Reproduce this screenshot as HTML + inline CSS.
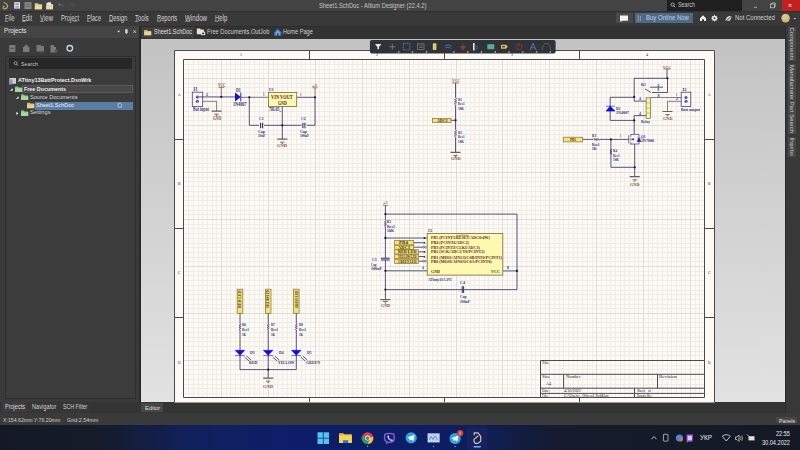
<!DOCTYPE html>
<html><head><meta charset="utf-8">
<style>
*{margin:0;padding:0;box-sizing:border-box}
html,body{width:800px;height:450px;overflow:hidden;background:#333;font-family:"Liberation Sans",sans-serif;color:#ddd}
.a{position:absolute}
.t{position:absolute;white-space:nowrap;line-height:1;transform-origin:0 0}
svg{position:absolute;left:0;top:0}
</style></head><body>
<!-- title bar -->
<div class="a" style="left:0;top:0;width:800px;height:11px;background:#434343"></div>
<div class="a" style="left:667px;top:0;width:75px;height:11px;background:#1f1f1f"></div>
<div class="a" style="left:742px;top:0;width:40px;height:11px;background:#434343"></div>
<div class="a" style="left:782px;top:0;width:18px;height:11px;background:#c42020"></div>
<!-- menu bar -->
<div class="a" style="left:0;top:11px;width:800px;height:14.5px;background:#393939;border-top:0.8px solid #303030"></div>
<div class="a" style="left:615.6px;top:13px;width:17px;height:10px;background:#4a4a4a"></div>
<div class="a" style="left:635px;top:13px;width:58px;height:10px;background:#4d6985"></div>
<!-- left panel -->
<div class="a" style="left:0;top:25.5px;width:139px;height:376px;background:#3a3a3a;border-top:1px solid #2b2b2b"></div>
<div class="a" style="left:0;top:26.4px;width:139px;height:11.7px;background:#444444"></div>
<div class="a" style="left:5px;top:55.6px;width:131px;height:343px;background:#3c3c3c;border:1px solid #2e2e2e"></div>
<div class="a" style="left:9px;top:58.2px;width:123px;height:10.8px;background:#272727;border-radius:1px"></div>
<div class="a" style="left:22px;top:85.4px;width:111px;height:7.6px;background:#484848;border:1px solid #5a5a5a"></div>
<div class="a" style="left:34.5px;top:101.6px;width:98.5px;height:8px;background:#5a7da3"></div>
<!-- divider -->
<div class="a" style="left:139px;top:25.5px;width:2.3px;height:387px;background:#2a2a2a"></div>
<!-- doc tabs -->
<div class="a" style="left:141.3px;top:25.5px;width:643.4px;height:13px;background:#333333;border-top:1px solid #2d2d2d"></div>
<div class="a" style="left:141.5px;top:26.5px;width:52.5px;height:11.5px;background:#3f3f3f"></div>
<!-- sheet bg -->
<div class="a" style="left:141.3px;top:38.5px;width:643.4px;height:364px;background:linear-gradient(#c3c3c3,#e2e2e2)"></div>
<!-- right strip -->
<div class="a" style="left:784.7px;top:25.5px;width:15.3px;height:387.5px;background:#383838;border-left:1px solid #2a2a2a"></div>
<div class="a" style="left:788.3px;top:26.7px;width:7.7px;height:34.6px;background:#474747"></div>
<div class="a" style="left:788.3px;top:64px;width:7.7px;height:70px;background:#474747"></div>
<div class="a" style="left:788.3px;top:136.7px;width:7.7px;height:20px;background:#474747"></div>
<!-- bottom tabs strip -->
<div class="a" style="left:0;top:401.75px;width:784.7px;height:10.75px;background:#343434"></div>
<div class="a" style="left:1.9px;top:402px;width:25px;height:9.75px;background:#3c3c3c"></div>
<div class="a" style="left:28px;top:402px;width:30.5px;height:9.75px;background:#363636"></div>
<div class="a" style="left:59.5px;top:402px;width:30px;height:9.75px;background:#363636"></div>
<div class="a" style="left:141.3px;top:402.5px;width:21.6px;height:9.1px;background:#474747"></div>
<!-- status bar -->
<div class="a" style="left:0;top:412.5px;width:800px;height:12.5px;background:#3a3a3a"></div>
<div class="a" style="left:776px;top:416.9px;width:21px;height:6.5px;background:#474747"></div>
<!-- taskbar -->
<div class="a" style="left:0;top:425px;width:800px;height:25px;background:linear-gradient(90deg,#141925 0px,#151b2a 100px,#10205c 190px,#0d1d6a 300px,#0e1d64 440px,#111d4c 500px,#151b2c 565px,#141925 800px)"></div>
<!-- sheet -->
<svg width="800" height="450" viewBox="0 0 800 450">
<rect x="174" y="50" width="541" height="352.5" fill="#fdfaf5"/>
<path d="M183.5 59.5V397.5M188.5 59.5V397.5M193.5 59.5V397.5M198.5 59.5V397.5M202.5 59.5V397.5M207.5 59.5V397.5M212.5 59.5V397.5M216.5 59.5V397.5M226.5 59.5V397.5M230.5 59.5V397.5M235.5 59.5V397.5M240.5 59.5V397.5M244.5 59.5V397.5M249.5 59.5V397.5M254.5 59.5V397.5M259.5 59.5V397.5M263.5 59.5V397.5M273.5 59.5V397.5M277.5 59.5V397.5M282.5 59.5V397.5M287.5 59.5V397.5M291.5 59.5V397.5M296.5 59.5V397.5M301.5 59.5V397.5M305.5 59.5V397.5M310.5 59.5V397.5M319.5 59.5V397.5M324.5 59.5V397.5M329.5 59.5V397.5M334.5 59.5V397.5M338.5 59.5V397.5M343.5 59.5V397.5M348.5 59.5V397.5M352.5 59.5V397.5M357.5 59.5V397.5M366.5 59.5V397.5M371.5 59.5V397.5M376.5 59.5V397.5M380.5 59.5V397.5M385.5 59.5V397.5M390.5 59.5V397.5M395.5 59.5V397.5M399.5 59.5V397.5M404.5 59.5V397.5M413.5 59.5V397.5M418.5 59.5V397.5M423.5 59.5V397.5M427.5 59.5V397.5M432.5 59.5V397.5M437.5 59.5V397.5M441.5 59.5V397.5M446.5 59.5V397.5M451.5 59.5V397.5M460.5 59.5V397.5M465.5 59.5V397.5M470.5 59.5V397.5M474.5 59.5V397.5M479.5 59.5V397.5M484.5 59.5V397.5M488.5 59.5V397.5M493.5 59.5V397.5M498.5 59.5V397.5M507.5 59.5V397.5M512.5 59.5V397.5M516.5 59.5V397.5M521.5 59.5V397.5M526.5 59.5V397.5M531.5 59.5V397.5M535.5 59.5V397.5M540.5 59.5V397.5M545.5 59.5V397.5M554.5 59.5V397.5M559.5 59.5V397.5M563.5 59.5V397.5M568.5 59.5V397.5M573.5 59.5V397.5M577.5 59.5V397.5M582.5 59.5V397.5M587.5 59.5V397.5M592.5 59.5V397.5M601.5 59.5V397.5M606.5 59.5V397.5M610.5 59.5V397.5M615.5 59.5V397.5M620.5 59.5V397.5M624.5 59.5V397.5M629.5 59.5V397.5M634.5 59.5V397.5M638.5 59.5V397.5M648.5 59.5V397.5M652.5 59.5V397.5M657.5 59.5V397.5M662.5 59.5V397.5M667.5 59.5V397.5M671.5 59.5V397.5M676.5 59.5V397.5M681.5 59.5V397.5M685.5 59.5V397.5M695.5 59.5V397.5M699.5 59.5V397.5M183.5 59.5H704.5M183.5 64.5H704.5M183.5 69.5H704.5M183.5 73.5H704.5M183.5 83.5H704.5M183.5 87.5H704.5M183.5 92.5H704.5M183.5 97.5H704.5M183.5 102.5H704.5M183.5 106.5H704.5M183.5 111.5H704.5M183.5 116.5H704.5M183.5 120.5H704.5M183.5 130.5H704.5M183.5 134.5H704.5M183.5 139.5H704.5M183.5 144.5H704.5M183.5 149.5H704.5M183.5 153.5H704.5M183.5 158.5H704.5M183.5 163.5H704.5M183.5 167.5H704.5M183.5 177.5H704.5M183.5 181.5H704.5M183.5 186.5H704.5M183.5 191.5H704.5M183.5 196.5H704.5M183.5 200.5H704.5M183.5 205.5H704.5M183.5 210.5H704.5M183.5 214.5H704.5M183.5 224.5H704.5M183.5 228.5H704.5M183.5 233.5H704.5M183.5 238.5H704.5M183.5 243.5H704.5M183.5 247.5H704.5M183.5 252.5H704.5M183.5 257.5H704.5M183.5 261.5H704.5M183.5 271.5H704.5M183.5 275.5H704.5M183.5 280.5H704.5M183.5 285.5H704.5M183.5 290.5H704.5M183.5 294.5H704.5M183.5 299.5H704.5M183.5 304.5H704.5M183.5 308.5H704.5M183.5 318.5H704.5M183.5 322.5H704.5M183.5 327.5H704.5M183.5 332.5H704.5M183.5 337.5H704.5M183.5 341.5H704.5M183.5 346.5H704.5M183.5 351.5H704.5M183.5 355.5H704.5M183.5 365.5H704.5M183.5 369.5H704.5M183.5 374.5H704.5M183.5 379.5H704.5M183.5 384.5H704.5M183.5 388.5H704.5M183.5 393.5H704.5" stroke="#eeede7" stroke-width="1" fill="none"/>
<path d="M221.5 59.5V397.5M268.5 59.5V397.5M315.5 59.5V397.5M362.5 59.5V397.5M409.5 59.5V397.5M456.5 59.5V397.5M502.5 59.5V397.5M549.5 59.5V397.5M596.5 59.5V397.5M643.5 59.5V397.5M690.5 59.5V397.5M183.5 78.5H704.5M183.5 125.5H704.5M183.5 172.5H704.5M183.5 219.5H704.5M183.5 266.5H704.5M183.5 313.5H704.5M183.5 360.5H704.5" stroke="#dfddd6" stroke-width="1" fill="none"/>

<g fill="none" stroke="#4a4a4a" stroke-width="1">
<path d="M174.5 50.5H714.5V402.5M174.5 50.5V402.5"/>
<path d="M183.5 59.5H704.5V397.5H183.5Z"/>
<path d="M309.5 50V59.5M444.5 50V59.5M579.5 50V59.5M174 139.5H183.5M174 228.5H183.5M174 317.5H183.5M704.5 139.5H714.5M704.5 228.5H714.5M704.5 317.5H714.5M309.5 397.5V402M444.5 397.5V402M579.5 397.5V402"/>
</g>
<g fill="none" stroke-width="0.8">
<!-- ===== Section 1: input / regulator ===== -->
<rect x="192.3" y="92.2" width="10.4" height="14.2" stroke="#44447c" stroke-width="0.8"/>
<path d="M202.7 101.3H216.6V111.1" stroke="#6e6456"/>
<path d="M198.6 96.9H235" stroke="#30305e"/>
<path d="M221.3 96.9V87.6M218.5 87.6H224.1" stroke="#9a5a50" stroke-width="0.8"/>
<path d="M240.8 97.3H268.4" stroke="#585866"/>
<path d="M249.3 97.3V125.3H315M315 97.3V125.3M282.3 106.4V139.1M296.7 97.3H315" stroke="#30305e"/>
<path d="M315 97.3V87.8M312.5 87.8H317.5" stroke="#9a5a50" stroke-width="0.8"/>
<rect x="268.4" y="92.4" width="28.3" height="14" fill="#fdf9b0" stroke="#7a6a3a"/>
<path d="M259 125.3H264" stroke="#fdfaf5" stroke-width="1.6"/>
<path d="M260.6 122.8V128.2M262.6 122.8V128.2" stroke="#30305e" stroke-width="1.1"/>
<path d="M301.5 125.3H306.5" stroke="#fdfaf5" stroke-width="1.6"/>
<path d="M302.9 122.8V128.2M305.2 122.8Q304.2 125.5 305.2 128.2" stroke="#30305e" stroke-width="1.1"/>

<!-- ===== Section 2: divider ===== -->
<path d="M455.5 82.9V97.6M455.5 105.2V129.7M455.5 137.3V152.4M451 120.3H455.5" stroke="#30305e"/>
<path d="M455.5 97.6L456.5 98.6L454.5 99.6L456.5 100.6L454.5 101.6L456.5 102.6L454.5 103.6L455.5 105.2M455.5 129.7L456.5 130.7L454.5 131.7L456.5 132.7L454.5 133.7L456.5 134.7L454.5 135.7L455.5 137.3" stroke="#30305e" stroke-width="0.7"/>
<path d="M452 82.9H459" stroke="#9a5a50" stroke-width="0.8"/>
<rect x="432.4" y="118.4" width="18.6" height="4" fill="#f6e27a" stroke="#8a7030" stroke-width="0.7"/>

<!-- ===== Section 3: relay ===== -->
<path d="M634.2 78.3H667.5V92.5H652M634.2 78.3V101.1H646M610.2 97.3H634.2M610.2 97.3V120.4H634.2M634.2 115.6H646M634.2 115.6V134.4M634.7 144V176.7M610.9 139.3V167.3H634.7M582.7 139.4H593M599.8 139.4H628.7M667 69V78.3" stroke="#30305e"/>
<path d="M593 139.4L594 138.4L595 140.4L596 138.4L597 140.4L598 138.4L599 140.4L599.8 139.4M610.9 148.7L611.9 149.7L609.9 150.7L611.9 151.7L609.9 152.7L611.9 153.7L610.9 154" stroke="#30305e" stroke-width="0.7"/>
<path d="M645 88.8L651 92.5M650 87.2H663" stroke="#30305e" stroke-width="0.8"/>
<path d="M606 106.2H615M606 111.1H615L610.2 106.2Z" stroke="#1010d8" fill="#1010d8" stroke-width="0.6"/>
<path d="M650.6 97.5H681.2M667.5 101.3H681.2M667.5 101.3V111.5" stroke="#6a6060"/>
<rect x="646.1" y="97.8" width="4.5" height="20.5" fill="#f8f4a8" stroke="#6a6a30" stroke-width="0.7"/>
<path d="M646.1 102.9H650.6M646.1 108H650.6M646.1 113.1H650.6" stroke="#8a8a50" stroke-width="0.5"/>
<path d="M663.5 69H670.5" stroke="#9a5a50" stroke-width="0.8"/>
<rect x="681.2" y="92.2" width="9.6" height="14.3" stroke="#44447c" stroke-width="0.8"/>
<path d="M628.7 135.3V143.3M630.8 134.2V136.8M630.8 138V140.8M630.8 142V144.6M630.8 134.4H639V144H630.8" stroke="#3a3a6a" stroke-width="0.7"/>
<path d="M637 138.2H641M637 141.4H641L639 138.2Z" fill="#1515c8" stroke="#1515c8" stroke-width="0.5"/>
<path d="M631.3 139.3L633.8 138V140.6Z" fill="#1515c8"/>
<rect x="563.2" y="137.2" width="19.5" height="4.7" fill="#f6e27a" stroke="#8a7030" stroke-width="0.7"/>

<!-- ===== Section 4: ATtiny ===== -->
<path d="M385.4 205.4V219.9M385.4 226.6V258.3M385.4 260V299.6M385.4 214.1H517V289.6H385.4M385.4 238H427.2M385.4 270.8H427.2M502.6 270.9H517M413.7 242.7H424M413.7 247.2H424M418.3 251.8H424M418.3 256.5H424M418.3 261.2H424" stroke="#30305e"/>
<path d="M385.4 219.9L386.4 220.9L384.4 221.9L386.4 222.9L384.4 223.9L386.4 224.9L384.4 225.9L385.4 226.6" stroke="#30305e" stroke-width="0.7"/>
<path d="M381 258.3H389.7M381 260H389.7" stroke="#30305e" stroke-width="1.1"/>
<path d="M462.2 286.2V293M463.6 286.2V293" stroke="#30305e" stroke-width="1"/>
<path d="M383 205.4H388" stroke="#9a5a50" stroke-width="0.8"/>
<path d="M380.4 299.6H390.4" stroke="#6e5c58" stroke-width="1.2"/><path d="M383 301.4H387.8M384.6 303H386.2" stroke="#6e5c58" stroke-width="1"/>
<rect x="427.2" y="233.5" width="75.6" height="41.6" fill="#fdf9b0" stroke="#7a6a3a"/>
<path d="M456 235.3H468.8" stroke="#4a3a2a" stroke-width="0.5"/>
<g fill="#f6e27a" stroke="#8a7030" stroke-width="0.7">
<rect x="394.7" y="240.5" width="19" height="4.4"/>
<rect x="394.7" y="245.3" width="19" height="4.2"/>
<rect x="394.7" y="249.8" width="23.6" height="4.2"/>
<rect x="394.7" y="254.5" width="23.6" height="4.2"/>
<rect x="394.7" y="259.2" width="23.6" height="4.2"/>
</g>
<g fill="#fdfaf5" stroke="#1a1a4a" stroke-width="0.5">
<circle cx="423.6" cy="247.2" r="0.9"/><circle cx="425.4" cy="247.2" r="0.9"/>
<circle cx="423.6" cy="261.2" r="0.9"/><circle cx="425.4" cy="261.2" r="0.9"/>
</g>
<g fill="#1a1a4a">
<circle cx="424.5" cy="238" r="0.9"/><circle cx="424.5" cy="251.8" r="0.9"/>
<path d="M423.5 243.6L425.5 243.6L424.5 241.6Z"/><path d="M423.5 257.4L425.5 257.4L424.5 255.4Z"/>
</g>

<!-- ===== Section 5: LEDs ===== -->
<g fill="#f6e27a" stroke="#8a7030" stroke-width="0.7">
<rect x="237.2" y="289.2" width="5.6" height="24.1"/>
<rect x="265.4" y="289.2" width="5.6" height="24.1"/>
<rect x="293.5" y="289.2" width="5.6" height="24.1"/>
</g>
<path d="M240 313.3V323.3M240 330V369.6H296.3V330M268.2 313.3V323.3M268.2 330V378.1M296.3 313.3V323.3" stroke="#30305e"/>
<path d="M240 323.3L241 324.3L239 325.3L241 326.3L239 327.3L241 328.3L239 329.3L240 330M268.2 323.3L269.2 324.3L267.2 325.3L269.2 326.3L267.2 327.3L269.2 328.3L267.2 329.3L268.2 330M296.3 323.3L297.3 324.3L295.3 325.3L297.3 326.3L295.3 327.3L297.3 328.3L295.3 329.3L296.3 330" stroke="#30305e" stroke-width="0.7"/>
<g fill="#1010d8" stroke="#1010d8" stroke-width="0.6">
<path d="M235.2 350.3H244.7L240 355.3ZM235.2 355.6H244.7"/>
<path d="M263.4 350.3H272.9L268.2 355.3ZM263.4 355.6H272.9"/>
<path d="M291.5 350.3H301L296.3 355.3ZM291.5 355.6H301"/>
</g>
<path d="M244.5 357L249 361M246.5 356L251 360M272.7 357L277.2 361M274.7 356L279.2 360M300.8 357L305.3 361M302.8 356L307.3 360" stroke="#1a1a5a" stroke-width="0.7"/>

<path d="M211.6 111.1H221.6M277.3 139.1H287.3M450.5 152.4H460.5M662.5 111.5H672.5M629.7 176.7H639.7M263.2 378.1H273.2" stroke="#6e5c58" stroke-width="1.2"/>
<path d="M214.4 114.2H218.8M215.8 115.4H217.4M280.1 142.2H284.5M281.5 143.4H283.1M453.3 155.5H457.7M454.7 156.7H456.3M665.3 114.6H669.7M666.7 115.8H668.3M632.5 179.8H636.9M633.9 181.0H635.5M266.0 381.2H270.4M267.4 382.4H269.0" stroke="#6e5c58" stroke-width="0.9"/>
<!-- ===== Title block ===== -->
<path d="M540.5 397.5V360.5H704.5M540.5 374.3H704.5M540.5 388.2H704.5M540.5 393.4H704.5M563.6 374.3V388.2M657.5 374.3V388.2M634.5 388.2V397.5" stroke="#4a4a4a" stroke-width="1"/>
</g>
<g fill="#1a1a48">
<circle cx="221.3" cy="96.9" r="1.15"/>
<circle cx="249.3" cy="97.3" r="1.15"/>
<circle cx="315" cy="97.3" r="1.15"/>
<circle cx="282.3" cy="125.3" r="1.15"/>
<circle cx="455.5" cy="120.3" r="1.15"/>
<circle cx="667.5" cy="78.3" r="1.15"/>
<circle cx="634.2" cy="96.9" r="1.15"/>
<circle cx="634.2" cy="120.4" r="1.15"/>
<circle cx="610.9" cy="139.4" r="1.15"/>
<circle cx="634.7" cy="167.3" r="1.15"/>
<circle cx="385.4" cy="214.1" r="1.15"/>
<circle cx="385.4" cy="238" r="1.15"/>
<circle cx="385.4" cy="270.8" r="1.15"/>
<circle cx="385.4" cy="289.6" r="1.15"/>
<circle cx="517" cy="270.9" r="1.15"/>
<circle cx="268.2" cy="369.6" r="1.15"/>
</g>
<g fill="#3a3ab0">
<circle cx="197.3" cy="96.9" r="1.5"/><circle cx="197.3" cy="101.3" r="1.5"/>
<circle cx="686" cy="97.5" r="1.5"/><circle cx="686" cy="101.3" r="1.5"/>
</g>
<path d="M196.5 96.1L198.1 97.7M196.5 100.5L198.1 102.1M685.2 96.7L686.8 98.3M685.2 100.5L686.8 102.1" stroke="#e8e8ff" stroke-width="0.5"/>
<path d="M235 92.6V101.4L240.8 97Z" fill="#1010d8"/>
<path d="M240.8 92.6V101.4" stroke="#1010d8" stroke-width="0.9"/>
<g font-family="Liberation Serif" font-weight="bold" font-size="3.8" fill="#3a3010">
<text transform="translate(241.3 308) rotate(-90)" textLength="17.5" lengthAdjust="spacingAndGlyphs">RED LED</text>
<text transform="translate(269.4 308) rotate(-90)" textLength="17.5" lengthAdjust="spacingAndGlyphs">YELLOW LED</text>
<text transform="translate(297.5 308) rotate(-90)" textLength="17.5" lengthAdjust="spacingAndGlyphs">GREEN LED</text>
</g>

</svg>
<svg width="800" height="450" viewBox="0 0 800 450">
<!-- title bar icons -->
<path d="M3.5 2.5Q7.5 3.5 7.5 5.8Q7.5 8.8 4.5 8.8Q3 8.8 3 7.5Q3 6 5 6" fill="none" stroke="#b9a263" stroke-width="1.2"/>
<rect x="14.2" y="2.2" width="5.8" height="6.4" fill="#e6e6f2"/>
<rect x="15.2" y="3.6" width="3.8" height="1.2" fill="#7a7a9a"/>
<rect x="15.4" y="6" width="3.4" height="1.6" fill="#9a9ab8"/>
<rect x="24.5" y="2.2" width="7" height="6.8" fill="#8a8a8a"/>
<rect x="25.5" y="4" width="5" height="0.8" fill="#5a5a5a"/>
<rect x="25.5" y="6" width="5" height="0.8" fill="#5a5a5a"/>
<path d="M34.8 3.2H38L38.8 4.2H42V9.3H34.8Z" fill="#dccb8a"/>
<path d="M35 5.5H42.3L41.5 9.3H34.8Z" fill="#ecdc9c"/>
<path d="M46.2 3H49.5L50.3 4H53V9.3H46.2Z" fill="#d8cfa8"/>
<path d="M47.5 2.3H51V5H47.5Z" fill="#e8e8f0"/>
<path d="M46.4 5.6H53.3L52.5 9.3H46.2Z" fill="#e6dcaa"/>
<path d="M63.5 6.5Q62 3.8 58.5 4.8M58.2 4.8L60 3.4M58.2 4.8L60 6" fill="none" stroke="#6c6c6c" stroke-width="0.9"/>
<path d="M69 6.5Q70.5 3.8 74 4.8M74.3 4.8L72.5 3.4M74.3 4.8L72.5 6" fill="none" stroke="#585858" stroke-width="0.9"/>
<!-- top right -->
<circle cx="672.6" cy="4.6" r="1.6" fill="none" stroke="#c8c8c8" stroke-width="0.8"/>
<path d="M673.7 5.7L675.2 7.3" stroke="#c8c8c8" stroke-width="0.9"/>
<path d="M754 7.3H757" stroke="#cfcfcf" stroke-width="0.7"/>
<rect x="770.5" y="4" width="3.8" height="3.8" fill="none" stroke="#d0d0d0" stroke-width="0.7"/>
<path d="M771.6 4V3H775.3V6.8H774.3" fill="none" stroke="#d0d0d0" stroke-width="0.6"/>
<path d="M788.6 4L791.4 6.8M791.4 4L788.6 6.8" stroke="#fff" stroke-width="0.9"/>
<path d="M4.8 21.4H8.2M22 21.4H25.6M40 21.4H44.2M73.6 21.4H76.6M87 21.4H90.6M108.8 21.4H113M134.7 21.4H138.2M156.9 21.4H160.6M184.9 21.4H190.5M214.6 21.4H218.6" stroke="#bdbdbd" stroke-width="0.6"/>
<!-- menu row icons -->
<path d="M620 15.5H628V20.8H622.2L620.6 22.2V20.8H620Z" fill="#f2f2f2"/>
<path d="M638.3 15.2V21.8M640.4 16V21" stroke="#9fb6cc" stroke-width="0.7"/>
<path d="M700 18.3L703 15.3L706 18.3V21H704V19.2H702V21H700Z" fill="#f0f0f0"/>
<circle cx="714.5" cy="18.2" r="2.5" fill="#e8e8e8"/><path d="M714.5 14.9V21.5M711.2 18.2H717.8M712.2 15.9L716.8 20.5M716.8 15.9L712.2 20.5" stroke="#e8e8e8" stroke-width="1"/>
<circle cx="714.5" cy="18.2" r="0.9" fill="#353535"/>
<path d="M725.2 20.8L727 17.2Q729 15.3 731.8 16.2L730 20.8Z" fill="#d8d8d8"/>
<path d="M725.5 21.8L732.5 15.2" stroke="#353535" stroke-width="0.8"/>
<circle cx="785.6" cy="18.1" r="4.3" fill="#cdb57e"/>
<circle cx="785" cy="17.2" r="2.6" fill="#dcc794"/>
<path d="M793.3 18H796.3L794.8 19.3Z" fill="#d0d0d0"/>
<!-- panel header -->
<path d="M117.3 30.8H120L118.65 32.6Z" fill="#f0f0f0"/>
<path d="M125.3 29.2H127.6V32.6L126.45 34.2L125.3 32.6Z" fill="#e0e0e0"/>
<path d="M133.4 30.4L135.8 32.8M135.8 30.4L133.4 32.8" stroke="#f0f0f0" stroke-width="0.8"/>
<!-- panel toolbar -->
<rect x="9.2" y="45" width="6.2" height="7" fill="#7a7a7a"/>
<rect x="10.2" y="47.8" width="4.2" height="0.9" fill="#4a4a4a"/>
<path d="M23 47.5L26.2 44.6L29.5 47.5V52H23Z" fill="#7a7a7a"/>
<path d="M36.5 45H40.5L41.5 46H44V51.5H36.5Z" fill="#777777"/>
<path d="M40 51.5L41.5 53L43 51.5" stroke="#5a5a5a" stroke-width="0.8" fill="none"/>
<path d="M50.5 45H54V47H56V52.5H50.5Z" fill="#7a7a7a"/>
<circle cx="56.3" cy="51" r="1.8" fill="#555"/>
<rect x="62.5" y="43" width="17" height="11" fill="#383c3f"/>
<circle cx="69.8" cy="48.3" r="2.8" fill="none" stroke="#d4d4d4" stroke-width="1.3"/>
<!-- panel search -->
<circle cx="15.6" cy="63.1" r="1.5" fill="none" stroke="#b0b0b0" stroke-width="0.8"/>
<path d="M16.6 64.1L18 65.6" stroke="#b0b0b0" stroke-width="0.9"/>
<!-- tree icons -->
<rect x="9.5" y="78" width="6.5" height="5.8" fill="#d8d0b8"/>
<rect x="9" y="79.5" width="3.5" height="5" fill="#8898c8"/>
<path d="M10 90.8L12.6 88.2V90.8Z" fill="#f0f0f0"/>
<path d="M15 86.6H18L18.7 87.5H22.2V92H15Z" fill="#8cc488"/>
<path d="M15 88.4H22.2V92H15Z" fill="#a6d69e"/>
<path d="M16 98.8L18.6 96.2V98.8Z" fill="#f0f0f0"/>
<path d="M21 94.6H24L24.7 95.5H28.2V100H21Z" fill="#8cc488"/>
<path d="M21 96.4H28.2V100H21Z" fill="#a6d69e"/>
<path d="M27 102.7H30L30.7 103.6H34.3V108.2H27Z" fill="#cdb870"/>
<path d="M27 104.5H34.3V108.2H27Z" fill="#e3d08a"/>
<path d="M118.2 103.3H120.5L121.6 104.4V107.3H118.2Z" fill="none" stroke="#dde6ef" stroke-width="0.6"/>
<path d="M16.4 111.8L18.4 113.4L16.4 115Z" fill="#f0f0f0"/>
<path d="M21 110.6H24L24.7 111.5H28.2V116H21Z" fill="#8cc488"/>
<path d="M21 112.4H28.2V116H21Z" fill="#a6d69e"/>
<!-- doc tab icons -->
<path d="M144.2 30H147.2L147.9 30.9H151.2V35.2H144.2Z" fill="#cdb870"/>
<path d="M144.2 31.6H151.2V35.2H144.2Z" fill="#e6d690"/>
<path d="M196.8 28.6H200L200.8 29.6H203.8V34.2H196.8Z" fill="#e8e2c8"/>
<rect x="201" y="31.7" width="4.2" height="3.4" fill="#f4f6f8"/>
<rect x="201.9" y="32.6" width="2.4" height="1.6" fill="#2a3a5a"/>
<path d="M274.3 32.3L277.8 28.8L281.3 32.3V35.6H274.3Z" fill="#3f7cc6"/>
<path d="M275.5 32.5L277.8 30.2L280.1 32.5V35.6H275.5Z" fill="#6aa7e8"/>
<rect x="277" y="33.6" width="1.6" height="2" fill="#2b2b2b"/>
<!-- right tabs text (rotated) -->
<g font-family="Liberation Sans" font-size="6.2" fill="#cfcfcf">
<text transform="translate(790.4 27.6) rotate(90)" textLength="32.5" lengthAdjust="spacingAndGlyphs">Components</text>
<text transform="translate(790.4 65) rotate(90)" textLength="68" lengthAdjust="spacingAndGlyphs">Manufacturer Part Search</text>
<text transform="translate(790.4 137.8) rotate(90)" textLength="18" lengthAdjust="spacingAndGlyphs">Properties</text>
</g>
</svg>

<svg width="800" height="450" viewBox="0 0 800 450">
<rect x="369.9" y="40.1" width="185.7" height="13.4" rx="1.8" fill="#2f3236"/>
<path d="M375 44H381.4L379 47V49.2H377.4V47Z" fill="#dce6ee"/>
<path d="M389.3 46.8H395.3M392.3 43.8V49.8" stroke="#7a88a0" stroke-width="0.8"/>
<rect x="403.3" y="43.3" width="6.6" height="6.6" fill="#2a2f4a" stroke="#8a90a4" stroke-width="0.7" stroke-dasharray="1.2 0.6"/>
<rect x="417.5" y="43.8" width="6.5" height="5.6" fill="none" stroke="#7a7a7a" stroke-width="0.8"/>
<path d="M419 45.8H423M419 47.5H423" stroke="#8a8a8a" stroke-width="0.6"/>
<rect x="432.8" y="43.2" width="3.6" height="6.8" rx="0.8" fill="#e6d07a"/>
<path d="M434.6 42.8V50.4" stroke="#c8a850" stroke-width="0.5"/>
<path d="M445 45.5Q448 44 451.5 46M445 47.8Q448 46.3 451.5 48.3" stroke="#4a72b8" stroke-width="0.9" fill="none"/>
<path d="M463 43V47.5M460.5 46.5L463 50L465.5 46.5Z" stroke="#8a3c3c" fill="#8a3c3c" stroke-width="0.9"/>
<rect x="473" y="43" width="1.6" height="7.4" fill="#e8e8f0"/>
<path d="M475.5 45L477.8 47.8L475.5 50" stroke="#5a6ab8" stroke-width="0.9" fill="none"/>
<rect x="487.3" y="44.2" width="7" height="5" rx="0.6" fill="#58aaa4"/>
<path d="M501 44.8H506L507.8 46.8L506 48.8H501Z" fill="#dcc068"/>
<rect x="502" y="46" width="3" height="1.4" fill="#5a4a20"/>
<circle cx="519" cy="46.8" r="3" fill="none" stroke="#8a3434" stroke-width="0.9"/>
<path d="M519 43.6V46.8" stroke="#8a3434" stroke-width="0.9"/>
<path d="M530 50.2L533 43L536 50.2M531.2 47.8H534.8" stroke="#5272b4" stroke-width="1" fill="none"/>
<path d="M542.5 50Q542.5 43.5 546.5 43.5Q550.5 43.5 550.5 50" stroke="#6a6a6a" stroke-width="0.8" fill="none"/>
<g fill="#e0e0e0">
<path d="M397.5 52.6H399.3V50.8Z"/><path d="M411.4 52.6H413.2V50.8Z"/><path d="M425.3 52.6H427.1V50.8Z"/>
<path d="M452.7 52.6H454.5V50.8Z"/><path d="M466.5 52.6H468.3V50.8Z"/><path d="M480.2 52.6H482V50.8Z"/>
<path d="M494 52.6H495.8V50.8Z"/><path d="M507.8 52.6H509.6V50.8Z"/><path d="M521.6 52.6H523.4V50.8Z"/>
<path d="M535.4 52.6H537.2V50.8Z"/><path d="M549.2 52.6H551V50.8Z"/>
</g>
</svg>

<svg width="800" height="450" viewBox="0 0 800 450">
<g fill="#52c4f4">
<rect x="317.5" y="432.3" width="5.4" height="5.5"/><rect x="323.6" y="432.3" width="5.4" height="5.5"/>
<rect x="317.5" y="438.5" width="5.4" height="5.5"/><rect x="323.6" y="438.5" width="5.4" height="5.5"/>
</g>
<path d="M339 433.2H343.3L344.3 434.3H351.8V443H339Z" fill="#e8b83c"/>
<rect x="339" y="435.5" width="12.8" height="7.5" fill="#f8d454"/>
<rect x="343" y="440.2" width="5.2" height="2.8" fill="#1f7ad8"/>
<circle cx="367.6" cy="438.1" r="5.8" fill="#e04434"/>
<path d="M367.6 438.1L362.6 441L362.1 435.8A5.8 5.8 0 0 0 367.6 443.9Z" fill="#2c9e48"/>
<path d="M367.6 438.1L367.6 443.9A5.8 5.8 0 0 0 373.2 436.7Z" fill="#f7c42a"/>
<path d="M361.9 436.5A5.8 5.8 0 0 0 367.6 443.9L369.8 439.6Z" fill="#2c9e48"/>
<circle cx="367.6" cy="438.1" r="2.5" fill="#fff"/>
<circle cx="367.6" cy="438.1" r="1.9" fill="#3a7ee6"/>
<circle cx="367.6" cy="446.3" r="0.7" fill="#9aa0b8"/>
<path d="M384.6 433.5Q389.5 431.8 394.4 433.5Q395.6 438 394.2 441.5Q391.5 443.3 388 443L386.2 444.8V442.3Q384 441 383.8 438Q383.8 435 384.6 433.5Z" fill="#7a64ee"/>
<path d="M385.8 434.6Q389.5 433.4 393.2 434.6Q394.1 438 393.2 440.6Q390.8 442 387.3 441.6Q385.3 440.5 385 438Q385 436 385.8 434.6Z" fill="#1a2266"/>
<path d="M387.5 435.6L388.6 435.4L389.3 436.9L388.8 437.6Q389.6 439 390.9 439.8L391.6 439.3L393 440Q392.8 441 391.6 441Q388.5 440.5 387.3 436.8Z" fill="#dcd4ff"/>
<circle cx="411.2" cy="437.9" r="5.6" fill="#2fa6e2"/>
<path d="M407.5 437.6L414.6 434.8L413.4 441L410.8 439.4L409.6 440.6L409.6 438.8Z" fill="#fff"/>
<rect x="427.6" y="433.4" width="12" height="9" fill="#dde8f4"/>
<rect x="428.2" y="434" width="10.8" height="7.8" fill="#b8d4f0"/>
<path d="M429 440L431 436.5L433 439.5L435 436L437.5 440" stroke="#3a5a9a" stroke-width="0.6" fill="none"/>
<circle cx="433.5" cy="446.5" r="0.7" fill="#9aa0b8"/>
<circle cx="455.1" cy="438.5" r="5.6" fill="#2fa6e2"/>
<path d="M451.4 438.2L458.5 435.4L457.3 441.6L454.7 440L453.5 441.2L453.5 439.4Z" fill="#fff"/>
<circle cx="460.2" cy="433.1" r="3.1" fill="#e23a3a"/>
<path d="M460.2 431.6V434.4" stroke="#fff" stroke-width="0.8"/>
<circle cx="455.1" cy="446.5" r="0.7" fill="#9aa0b8"/>
<rect x="466.8" y="426.8" width="20.5" height="22.5" rx="1.5" fill="#1e2b6e" opacity="0.45"/>
<path d="M474.2 435.2V432.8H478L480.7 436.3V441.2L478 443.4H475.2L474 441.5V439.4L478.2 435.8" fill="none" stroke="#d2c4a4" stroke-width="1.2" stroke-linejoin="round"/>
<rect x="473.5" y="446" width="7.5" height="1.4" rx="0.7" fill="#6cb4f0"/>
<!-- tray -->
<path d="M651.5 439.2L654 436.6L656.5 439.2" stroke="#e8e8e8" stroke-width="0.8" fill="none"/>
<rect x="663.4" y="434.3" width="4.6" height="6.8" rx="0.6" fill="none" stroke="#d8d8d8" stroke-width="0.7"/>
<circle cx="679.5" cy="438" r="3.6" fill="#3a8ee0"/>
<circle cx="681" cy="439.5" r="2" fill="#e86a3a"/>
<path d="M686.5 434.5H693L692.5 441.5L688 441.8L686.6 443V441.5Z" fill="#9a5ae0"/>
<rect x="687.8" y="435.8" width="4" height="4.4" fill="#e0c8ff"/>
<path d="M722.3 436.3Q726.3 433 730.3 436.3L726.3 441Z" fill="none" stroke="#e8e8e8" stroke-width="0.8"/>
<path d="M735.5 437H737L739 435V441.5L737 439.5H735.5Z" fill="none" stroke="#e0e0e0" stroke-width="0.7"/>
<path d="M740.5 436.5Q741.5 438.2 740.5 440M741.8 435.6Q743.3 438.2 741.8 440.8" stroke="#e0e0e0" stroke-width="0.6" fill="none"/>
<rect x="748.5" y="436.2" width="6" height="4.2" fill="#e0e0e0"/>
<path d="M747 434.5L749 436.5" stroke="#e0e0e0" stroke-width="0.8"/>
</svg>

<span class="t" style="left:319.00px;top:2.91px;font-size:6.61px;color:#c8c8c8;transform:scaleX(0.876);font-family:'Liberation Sans',sans-serif;font-weight:normal">Sheet1.SchDoc - Altium Designer (22.4.2)</span>
<span class="t" style="left:4.65px;top:14.08px;font-size:8.30px;color:#d2d2d2;transform:scaleX(0.707);font-family:'Liberation Sans',sans-serif;font-weight:normal">File</span>
<span class="t" style="left:22.00px;top:14.08px;font-size:8.30px;color:#d2d2d2;transform:scaleX(0.699);font-family:'Liberation Sans',sans-serif;font-weight:normal">Edit</span>
<span class="t" style="left:40.00px;top:14.08px;font-size:8.30px;color:#d2d2d2;transform:scaleX(0.729);font-family:'Liberation Sans',sans-serif;font-weight:normal">View</span>
<span class="t" style="left:61.00px;top:14.08px;font-size:8.30px;color:#d2d2d2;transform:scaleX(0.697);font-family:'Liberation Sans',sans-serif;font-weight:normal">Project</span>
<span class="t" style="left:87.00px;top:14.08px;font-size:8.30px;color:#d2d2d2;transform:scaleX(0.675);font-family:'Liberation Sans',sans-serif;font-weight:normal">Place</span>
<span class="t" style="left:108.75px;top:14.08px;font-size:8.30px;color:#d2d2d2;transform:scaleX(0.707);font-family:'Liberation Sans',sans-serif;font-weight:normal">Design</span>
<span class="t" style="left:134.70px;top:14.08px;font-size:8.30px;color:#d2d2d2;transform:scaleX(0.713);font-family:'Liberation Sans',sans-serif;font-weight:normal">Tools</span>
<span class="t" style="left:156.90px;top:14.08px;font-size:8.30px;color:#d2d2d2;transform:scaleX(0.692);font-family:'Liberation Sans',sans-serif;font-weight:normal">Reports</span>
<span class="t" style="left:184.90px;top:14.08px;font-size:8.30px;color:#d2d2d2;transform:scaleX(0.749);font-family:'Liberation Sans',sans-serif;font-weight:normal">Window</span>
<span class="t" style="left:214.60px;top:14.08px;font-size:8.30px;color:#d2d2d2;transform:scaleX(0.727);font-family:'Liberation Sans',sans-serif;font-weight:normal">Help</span>
<span class="t" style="left:678.00px;top:2.48px;font-size:6.76px;color:#c8c8c8;transform:scaleX(0.794);font-family:'Liberation Sans',sans-serif;font-weight:normal">Search</span>
<span class="t" style="left:646.00px;top:15.00px;font-size:6.91px;color:#c3d3e3;transform:scaleX(0.867);font-family:'Liberation Sans',sans-serif;font-weight:normal">Buy Online Now</span>
<span class="t" style="left:735.00px;top:14.88px;font-size:6.76px;color:#cfcfcf;transform:scaleX(0.887);font-family:'Liberation Sans',sans-serif;font-weight:normal">Not Connected</span>
<span class="t" style="left:4.10px;top:28.35px;font-size:6.91px;color:#e6e6e6;transform:scaleX(0.901);font-family:'Liberation Sans',sans-serif;font-weight:normal">Projects</span>
<span class="t" style="left:21.00px;top:61.00px;font-size:6.15px;color:#c4c4c4;transform:scaleX(0.873);font-family:'Liberation Sans',sans-serif;font-weight:normal">Search</span>
<span class="t" style="left:17.50px;top:78.46px;font-size:5.84px;color:#f0f0f0;transform:scaleX(0.927);font-family:'Liberation Sans',sans-serif;font-weight:bold">ATtiny13BattProtect.DsnWrk</span>
<span class="t" style="left:23.50px;top:86.79px;font-size:5.68px;color:#f0f0f0;transform:scaleX(0.943);font-family:'Liberation Sans',sans-serif;font-weight:bold">Free Documents</span>
<span class="t" style="left:29.50px;top:94.79px;font-size:5.68px;color:#d8d8d8;transform:scaleX(0.983);font-family:'Liberation Sans',sans-serif;font-weight:normal">Source Documents</span>
<span class="t" style="left:35.50px;top:103.05px;font-size:5.38px;color:#eef2f6;transform:scaleX(1.017);font-family:'Liberation Sans',sans-serif;font-weight:normal">Sheet1.SchDoc</span>
<span class="t" style="left:29.50px;top:110.46px;font-size:5.84px;color:#d8d8d8;transform:scaleX(0.972);font-family:'Liberation Sans',sans-serif;font-weight:normal">Settings</span>
<span class="t" style="left:154.00px;top:29.14px;font-size:6.45px;color:#e0e0e0;transform:scaleX(0.848);font-family:'Liberation Sans',sans-serif;font-weight:normal">Sheet1.SchDoc</span>
<span class="t" style="left:206.50px;top:29.14px;font-size:6.45px;color:#d0d0d0;transform:scaleX(0.889);font-family:'Liberation Sans',sans-serif;font-weight:normal">Free Documents.OutJob</span>
<span class="t" style="left:283.00px;top:29.14px;font-size:6.45px;color:#d0d0d0;transform:scaleX(0.880);font-family:'Liberation Sans',sans-serif;font-weight:normal">Home Page</span>
<span class="t" style="left:5.00px;top:404.45px;font-size:7.14px;color:#d8d8d8;transform:scaleX(0.775);font-family:'Liberation Sans',sans-serif;font-weight:normal">Projects</span>
<span class="t" style="left:31.90px;top:404.45px;font-size:7.14px;color:#cfcfcf;transform:scaleX(0.796);font-family:'Liberation Sans',sans-serif;font-weight:normal">Navigator</span>
<span class="t" style="left:63.10px;top:404.45px;font-size:7.14px;color:#cfcfcf;transform:scaleX(0.741);font-family:'Liberation Sans',sans-serif;font-weight:normal">SCH Filter</span>
<span class="t" style="left:144.75px;top:404.80px;font-size:6.15px;color:#dddddd;transform:scaleX(0.950);font-family:'Liberation Sans',sans-serif;font-weight:normal">Editor</span>
<span class="t" style="left:2.75px;top:417.40px;font-size:6.15px;color:#d0d0d0;transform:scaleX(0.848);font-family:'Liberation Sans',sans-serif;font-weight:normal">X:154.62mm Y:76.20mm</span>
<span class="t" style="left:66.90px;top:417.40px;font-size:6.15px;color:#d0d0d0;transform:scaleX(0.878);font-family:'Liberation Sans',sans-serif;font-weight:normal">Grid:2.54mm</span>
<span class="t" style="left:779.00px;top:417.90px;font-size:6.15px;color:#e0e0e0;transform:scaleX(0.852);font-family:'Liberation Sans',sans-serif;font-weight:normal">Panels</span>
<span class="t" style="left:700.00px;top:434.75px;font-size:6.91px;color:#e8e8e8;transform:scaleX(0.921);font-family:'Liberation Sans',sans-serif;font-weight:normal">УКР</span>
<span class="t" style="left:776.00px;top:431.25px;font-size:6.91px;color:#e8e8e8;transform:scaleX(0.809);font-family:'Liberation Sans',sans-serif;font-weight:normal">22:55</span>
<span class="t" style="left:762.00px;top:440.25px;font-size:6.91px;color:#e8e8e8;transform:scaleX(0.809);font-family:'Liberation Sans',sans-serif;font-weight:normal">30.04.2022</span>
<span class="t" style="left:193.00px;top:86.39px;font-size:5.98px;color:#303070;transform:scaleX(0.752);font-family:'Liberation Serif',serif;font-weight:bold">J1</span>
<span class="t" style="left:193.00px;top:107.47px;font-size:5.65px;color:#3a3a70;transform:scaleX(0.703);font-family:'Liberation Serif',serif;font-weight:bold">Bat input</span>
<span class="t" style="left:206.20px;top:91.93px;font-size:4.98px;color:#303070;transform:scaleX(0.802);font-family:'Liberation Serif',serif;font-weight:bold">2</span>
<span class="t" style="left:217.60px;top:82.39px;font-size:5.98px;color:#8a4a40;transform:scaleX(0.571);font-family:'Liberation Serif',serif;font-weight:bold">VCC</span>
<span class="t" style="left:212.60px;top:116.07px;font-size:5.65px;color:#8a4a40;transform:scaleX(0.653);font-family:'Liberation Serif',serif;font-weight:bold">GND</span>
<span class="t" style="left:235.80px;top:86.69px;font-size:5.98px;color:#303070;transform:scaleX(0.643);font-family:'Liberation Serif',serif;font-weight:bold">D1</span>
<span class="t" style="left:232.50px;top:101.53px;font-size:5.82px;color:#303070;transform:scaleX(0.720);font-family:'Liberation Serif',serif;font-weight:bold">1N4007</span>
<span class="t" style="left:262.60px;top:92.35px;font-size:5.32px;color:#303070;transform:scaleX(0.527);font-family:'Liberation Serif',serif;font-weight:bold">1</span>
<span class="t" style="left:268.70px;top:87.80px;font-size:4.65px;color:#303070;transform:scaleX(0.809);font-family:'Liberation Serif',serif;font-weight:bold">U1</span>
<span class="t" style="left:271.00px;top:94.79px;font-size:5.15px;color:#602818;transform:scaleX(0.858);font-family:'Liberation Serif',serif;font-weight:bold">VIN VOUT</span>
<span class="t" style="left:277.70px;top:100.99px;font-size:5.15px;color:#602818;transform:scaleX(0.769);font-family:'Liberation Serif',serif;font-weight:bold">GND</span>
<span class="t" style="left:268.70px;top:106.61px;font-size:5.48px;color:#303070;transform:scaleX(0.714);font-family:'Liberation Serif',serif;font-weight:bold">78L05_</span>
<span class="t" style="left:299.60px;top:93.04px;font-size:4.49px;color:#303070;transform:scaleX(0.535);font-family:'Liberation Serif',serif;font-weight:bold">1</span>
<span class="t" style="left:312.30px;top:83.80px;font-size:4.65px;color:#8a4a40;transform:scaleX(1.025);font-family:'Liberation Serif',serif;font-weight:bold">+5</span>
<span class="t" style="left:277.30px;top:144.46px;font-size:4.82px;color:#8a4a40;transform:scaleX(0.925);font-family:'Liberation Serif',serif;font-weight:bold">GND</span>
<span class="t" style="left:259.00px;top:116.60px;font-size:4.65px;color:#303070;transform:scaleX(0.809);font-family:'Liberation Serif',serif;font-weight:bold">C1</span>
<span class="t" style="left:257.50px;top:129.43px;font-size:4.98px;color:#303070;transform:scaleX(0.790);font-family:'Liberation Serif',serif;font-weight:bold">Cap</span>
<span class="t" style="left:257.50px;top:133.70px;font-size:4.65px;color:#303070;transform:scaleX(0.744);font-family:'Liberation Serif',serif;font-weight:bold">10uF</span>
<span class="t" style="left:301.00px;top:116.60px;font-size:4.65px;color:#303070;transform:scaleX(0.844);font-family:'Liberation Serif',serif;font-weight:bold">C2</span>
<span class="t" style="left:300.00px;top:129.43px;font-size:4.98px;color:#303070;transform:scaleX(0.790);font-family:'Liberation Serif',serif;font-weight:bold">Cap</span>
<span class="t" style="left:300.00px;top:133.70px;font-size:4.65px;color:#303070;transform:scaleX(0.725);font-family:'Liberation Serif',serif;font-weight:bold">100nF</span>
<span class="t" style="left:452.00px;top:78.74px;font-size:4.49px;color:#8a4a40;transform:scaleX(0.823);font-family:'Liberation Serif',serif;font-weight:bold">VCC</span>
<span class="t" style="left:458.00px;top:97.58px;font-size:4.32px;color:#303070;transform:scaleX(0.758);font-family:'Liberation Serif',serif;font-weight:bold">R1</span>
<span class="t" style="left:458.00px;top:102.08px;font-size:4.32px;color:#303070;transform:scaleX(0.732);font-family:'Liberation Serif',serif;font-weight:bold">Res1</span>
<span class="t" style="left:458.00px;top:106.58px;font-size:4.32px;color:#303070;transform:scaleX(0.781);font-family:'Liberation Serif',serif;font-weight:bold">30K</span>
<span class="t" style="left:458.00px;top:130.58px;font-size:4.32px;color:#303070;transform:scaleX(0.758);font-family:'Liberation Serif',serif;font-weight:bold">R2</span>
<span class="t" style="left:458.00px;top:135.08px;font-size:4.32px;color:#303070;transform:scaleX(0.732);font-family:'Liberation Serif',serif;font-weight:bold">Res1</span>
<span class="t" style="left:458.00px;top:139.58px;font-size:4.32px;color:#303070;transform:scaleX(0.781);font-family:'Liberation Serif',serif;font-weight:bold">10K</span>
<span class="t" style="left:451.00px;top:157.04px;font-size:4.49px;color:#8a4a40;transform:scaleX(0.953);font-family:'Liberation Serif',serif;font-weight:bold">GND</span>
<span class="t" style="left:436.50px;top:118.78px;font-size:4.32px;color:#3a3010;transform:scaleX(0.911);font-family:'Liberation Serif',serif;font-weight:bold">ADC3</span>
<span class="t" style="left:663.00px;top:65.58px;font-size:4.32px;color:#8a4a40;transform:scaleX(0.855);font-family:'Liberation Serif',serif;font-weight:bold">VCC</span>
<span class="t" style="left:641.00px;top:83.08px;font-size:4.32px;color:#303070;transform:scaleX(0.906);font-family:'Liberation Serif',serif;font-weight:bold">K1</span>
<span class="t" style="left:657.00px;top:84.82px;font-size:3.32px;color:#303070;transform:scaleX(1.444);font-family:'Liberation Serif',serif;font-weight:bold">2</span>
<span class="t" style="left:657.00px;top:89.18px;font-size:3.49px;color:#303070;transform:scaleX(1.376);font-family:'Liberation Serif',serif;font-weight:bold">3</span>
<span class="t" style="left:657.00px;top:93.62px;font-size:4.15px;color:#303070;transform:scaleX(1.348);font-family:'Liberation Serif',serif;font-weight:bold">3</span>
<span class="t" style="left:638.50px;top:98.04px;font-size:3.66px;color:#303070;transform:scaleX(1.094);font-family:'Liberation Serif',serif;font-weight:bold">4</span>
<span class="t" style="left:638.50px;top:111.66px;font-size:3.99px;color:#303070;transform:scaleX(1.003);font-family:'Liberation Serif',serif;font-weight:bold">4</span>
<span class="t" style="left:641.00px;top:119.43px;font-size:4.98px;color:#303070;transform:scaleX(0.739);font-family:'Liberation Serif',serif;font-weight:bold">Relay</span>
<span class="t" style="left:676.20px;top:92.66px;font-size:3.99px;color:#303070;transform:scaleX(0.602);font-family:'Liberation Serif',serif;font-weight:bold">1</span>
<span class="t" style="left:675.60px;top:97.62px;font-size:3.32px;color:#303070;transform:scaleX(1.204);font-family:'Liberation Serif',serif;font-weight:bold">2</span>
<span class="t" style="left:681.50px;top:88.46px;font-size:3.99px;color:#303070;transform:scaleX(1.128);font-family:'Liberation Serif',serif;font-weight:bold">J2</span>
<span class="t" style="left:681.00px;top:107.96px;font-size:4.82px;color:#303070;transform:scaleX(0.802);font-family:'Liberation Serif',serif;font-weight:bold">Batt output</span>
<span class="t" style="left:663.00px;top:116.50px;font-size:4.65px;color:#8a4a40;transform:scaleX(0.919);font-family:'Liberation Serif',serif;font-weight:bold">GND</span>
<span class="t" style="left:616.00px;top:107.08px;font-size:4.32px;color:#303070;transform:scaleX(0.814);font-family:'Liberation Serif',serif;font-weight:bold">D2</span>
<span class="t" style="left:616.00px;top:111.08px;font-size:4.32px;color:#303070;transform:scaleX(0.934);font-family:'Liberation Serif',serif;font-weight:bold">1N4007</span>
<span class="t" style="left:641.00px;top:134.58px;font-size:4.32px;color:#303070;transform:scaleX(0.815);font-family:'Liberation Serif',serif;font-weight:bold">Q1</span>
<span class="t" style="left:641.00px;top:139.08px;font-size:4.32px;color:#303070;transform:scaleX(0.934);font-family:'Liberation Serif',serif;font-weight:bold">2N7000</span>
<span class="t" style="left:592.00px;top:133.62px;font-size:4.15px;color:#303070;transform:scaleX(0.827);font-family:'Liberation Serif',serif;font-weight:bold">R3</span>
<span class="t" style="left:592.00px;top:142.58px;font-size:4.32px;color:#303070;transform:scaleX(0.845);font-family:'Liberation Serif',serif;font-weight:bold">Res1</span>
<span class="t" style="left:592.00px;top:147.08px;font-size:4.32px;color:#303070;transform:scaleX(0.815);font-family:'Liberation Serif',serif;font-weight:bold">1K</span>
<span class="t" style="left:613.00px;top:148.58px;font-size:4.32px;color:#303070;transform:scaleX(0.795);font-family:'Liberation Serif',serif;font-weight:bold">R4</span>
<span class="t" style="left:613.00px;top:153.58px;font-size:4.32px;color:#303070;transform:scaleX(0.732);font-family:'Liberation Serif',serif;font-weight:bold">Res1</span>
<span class="t" style="left:613.00px;top:158.08px;font-size:4.32px;color:#303070;transform:scaleX(0.781);font-family:'Liberation Serif',serif;font-weight:bold">10K</span>
<span class="t" style="left:620.00px;top:135.00px;font-size:3.82px;color:#303070;transform:scaleX(0.628);font-family:'Liberation Serif',serif;font-weight:bold">1</span>
<span class="t" style="left:630.00px;top:182.50px;font-size:4.65px;color:#8a4a40;transform:scaleX(0.919);font-family:'Liberation Serif',serif;font-weight:bold">GND</span>
<span class="t" style="left:570.00px;top:137.92px;font-size:4.15px;color:#3a3010;transform:scaleX(0.812);font-family:'Liberation Serif',serif;font-weight:bold">PB1</span>
<span class="t" style="left:383.20px;top:201.08px;font-size:4.32px;color:#8a4a40;transform:scaleX(0.974);font-family:'Liberation Serif',serif;font-weight:bold">+5</span>
<span class="t" style="left:387.00px;top:219.58px;font-size:4.32px;color:#303070;transform:scaleX(0.795);font-family:'Liberation Serif',serif;font-weight:bold">R5</span>
<span class="t" style="left:387.00px;top:224.50px;font-size:4.65px;color:#303070;transform:scaleX(0.837);font-family:'Liberation Serif',serif;font-weight:bold">Res1</span>
<span class="t" style="left:387.00px;top:229.04px;font-size:4.49px;color:#303070;transform:scaleX(0.878);font-family:'Liberation Serif',serif;font-weight:bold">10K</span>
<span class="t" style="left:371.50px;top:257.58px;font-size:4.32px;color:#303070;transform:scaleX(0.852);font-family:'Liberation Serif',serif;font-weight:bold">C3</span>
<span class="t" style="left:371.00px;top:261.93px;font-size:4.98px;color:#303070;transform:scaleX(0.620);font-family:'Liberation Serif',serif;font-weight:bold">Cap</span>
<span class="t" style="left:371.00px;top:266.50px;font-size:4.65px;color:#303070;transform:scaleX(0.886);font-family:'Liberation Serif',serif;font-weight:bold">100nF</span>
<span class="t" style="left:381.00px;top:304.08px;font-size:4.32px;color:#8a4a40;transform:scaleX(0.937);font-family:'Liberation Serif',serif;font-weight:bold">GND</span>
<span class="t" style="left:428.00px;top:229.46px;font-size:3.99px;color:#303070;transform:scaleX(0.903);font-family:'Liberation Serif',serif;font-weight:bold">U2</span>
<span class="t" style="left:430.90px;top:236.30px;font-size:4.65px;color:#602818;transform:scaleX(0.865);font-family:'Liberation Serif',serif;font-weight:bold">PB5 (PCINT5/RESET/ADC0/dW)</span>
<span class="t" style="left:430.90px;top:241.00px;font-size:4.65px;color:#602818;transform:scaleX(0.881);font-family:'Liberation Serif',serif;font-weight:bold">PB4 (PCINT4/ADC2)</span>
<span class="t" style="left:430.90px;top:245.43px;font-size:4.98px;color:#602818;transform:scaleX(0.812);font-family:'Liberation Serif',serif;font-weight:bold">PB3 (PCINT3/CLKI/ADC3)</span>
<span class="t" style="left:430.90px;top:250.16px;font-size:4.82px;color:#602818;transform:scaleX(0.857);font-family:'Liberation Serif',serif;font-weight:bold">PB2 (SCK/ADC1/T0/PCINT2)</span>
<span class="t" style="left:430.90px;top:254.73px;font-size:4.98px;color:#602818;transform:scaleX(0.821);font-family:'Liberation Serif',serif;font-weight:bold">PB1 (MISO/AIN1/OC0B/INT0/PCINT1)</span>
<span class="t" style="left:430.90px;top:259.43px;font-size:4.98px;color:#602818;transform:scaleX(0.822);font-family:'Liberation Serif',serif;font-weight:bold">PB0 (MOSI/AIN0/OC0A/PCINT0)</span>
<span class="t" style="left:431.00px;top:269.96px;font-size:4.82px;color:#602818;transform:scaleX(0.840);font-family:'Liberation Serif',serif;font-weight:bold">GND</span>
<span class="t" style="left:491.00px;top:269.96px;font-size:4.82px;color:#602818;transform:scaleX(0.862);font-family:'Liberation Serif',serif;font-weight:bold">VCC</span>
<span class="t" style="left:428.00px;top:277.84px;font-size:4.49px;color:#303070;transform:scaleX(0.840);font-family:'Liberation Serif',serif;font-weight:bold">ATtiny13A-PU</span>
<span class="t" style="left:422.30px;top:265.62px;font-size:4.15px;color:#303070;transform:scaleX(0.915);font-family:'Liberation Serif',serif;font-weight:bold">4</span>
<span class="t" style="left:507.00px;top:265.62px;font-size:4.15px;color:#303070;transform:scaleX(0.963);font-family:'Liberation Serif',serif;font-weight:bold">8</span>
<span class="t" style="left:460.00px;top:280.58px;font-size:4.32px;color:#303070;transform:scaleX(0.947);font-family:'Liberation Serif',serif;font-weight:bold">C4</span>
<span class="t" style="left:459.50px;top:294.43px;font-size:4.98px;color:#303070;transform:scaleX(0.733);font-family:'Liberation Serif',serif;font-weight:bold">Cap</span>
<span class="t" style="left:460.00px;top:299.50px;font-size:4.65px;color:#303070;transform:scaleX(0.806);font-family:'Liberation Serif',serif;font-weight:bold">100nF</span>
<span class="t" style="left:399.00px;top:241.12px;font-size:4.15px;color:#3a3010;transform:scaleX(1.219);font-family:'Liberation Serif',serif;font-weight:bold">PB4</span>
<span class="t" style="left:398.00px;top:245.82px;font-size:4.15px;color:#3a3010;transform:scaleX(1.083);font-family:'Liberation Serif',serif;font-weight:bold">ADC3</span>
<span class="t" style="left:397.50px;top:250.42px;font-size:4.15px;color:#3a3010;transform:scaleX(1.008);font-family:'Liberation Serif',serif;font-weight:bold">RED LED</span>
<span class="t" style="left:397.50px;top:255.12px;font-size:4.15px;color:#3a3010;transform:scaleX(0.656);font-family:'Liberation Serif',serif;font-weight:bold">YELLOW LED</span>
<span class="t" style="left:397.50px;top:259.82px;font-size:4.15px;color:#3a3010;transform:scaleX(0.760);font-family:'Liberation Serif',serif;font-weight:bold">GREEN LED</span>
<span class="t" style="left:242.00px;top:323.08px;font-size:4.32px;color:#303070;transform:scaleX(0.758);font-family:'Liberation Serif',serif;font-weight:bold">R6</span>
<span class="t" style="left:242.00px;top:327.58px;font-size:4.32px;color:#303070;transform:scaleX(0.788);font-family:'Liberation Serif',serif;font-weight:bold">Res1</span>
<span class="t" style="left:242.00px;top:332.58px;font-size:4.32px;color:#303070;transform:scaleX(0.724);font-family:'Liberation Serif',serif;font-weight:bold">1K</span>
<span class="t" style="left:270.50px;top:323.08px;font-size:4.32px;color:#303070;transform:scaleX(0.758);font-family:'Liberation Serif',serif;font-weight:bold">R7</span>
<span class="t" style="left:270.50px;top:327.58px;font-size:4.32px;color:#303070;transform:scaleX(0.788);font-family:'Liberation Serif',serif;font-weight:bold">Res1</span>
<span class="t" style="left:270.50px;top:332.58px;font-size:4.32px;color:#303070;transform:scaleX(0.724);font-family:'Liberation Serif',serif;font-weight:bold">1K</span>
<span class="t" style="left:298.50px;top:323.08px;font-size:4.32px;color:#303070;transform:scaleX(0.758);font-family:'Liberation Serif',serif;font-weight:bold">R8</span>
<span class="t" style="left:298.50px;top:327.58px;font-size:4.32px;color:#303070;transform:scaleX(0.788);font-family:'Liberation Serif',serif;font-weight:bold">Res1</span>
<span class="t" style="left:298.50px;top:332.58px;font-size:4.32px;color:#303070;transform:scaleX(0.724);font-family:'Liberation Serif',serif;font-weight:bold">1K</span>
<span class="t" style="left:250.00px;top:350.58px;font-size:4.32px;color:#303070;transform:scaleX(0.852);font-family:'Liberation Serif',serif;font-weight:bold">D3</span>
<span class="t" style="left:278.50px;top:350.58px;font-size:4.32px;color:#303070;transform:scaleX(0.852);font-family:'Liberation Serif',serif;font-weight:bold">D4</span>
<span class="t" style="left:307.00px;top:350.58px;font-size:4.32px;color:#303070;transform:scaleX(0.852);font-family:'Liberation Serif',serif;font-weight:bold">D5</span>
<span class="t" style="left:249.00px;top:360.88px;font-size:4.32px;color:#303070;transform:scaleX(0.932);font-family:'Liberation Serif',serif;font-weight:bold">RED</span>
<span class="t" style="left:278.00px;top:360.88px;font-size:4.32px;color:#303070;transform:scaleX(0.849);font-family:'Liberation Serif',serif;font-weight:bold">YELLOW</span>
<span class="t" style="left:306.00px;top:360.88px;font-size:4.32px;color:#303070;transform:scaleX(0.911);font-family:'Liberation Serif',serif;font-weight:bold">GREEN</span>
<span class="t" style="left:263.00px;top:384.98px;font-size:4.32px;color:#8a4a40;transform:scaleX(1.042);font-family:'Liberation Serif',serif;font-weight:bold">GND</span>
<span class="t" style="left:542.00px;top:361.12px;font-size:4.15px;color:#202020;transform:scaleX(0.909);font-family:'Liberation Serif',serif;font-weight:normal">Title</span>
<span class="t" style="left:542.00px;top:375.42px;font-size:4.15px;color:#202020;transform:scaleX(1.119);font-family:'Liberation Serif',serif;font-weight:normal">Size</span>
<span class="t" style="left:546.00px;top:381.92px;font-size:4.15px;color:#202020;transform:scaleX(0.985);font-family:'Liberation Serif',serif;font-weight:normal">A4</span>
<span class="t" style="left:566.00px;top:375.22px;font-size:4.15px;color:#202020;transform:scaleX(1.065);font-family:'Liberation Serif',serif;font-weight:normal">Number</span>
<span class="t" style="left:659.00px;top:375.22px;font-size:4.15px;color:#202020;transform:scaleX(1.219);font-family:'Liberation Serif',serif;font-weight:normal">Revision</span>
<span class="t" style="left:542.00px;top:388.92px;font-size:4.15px;color:#202020;transform:scaleX(0.834);font-family:'Liberation Serif',serif;font-weight:normal">Date:</span>
<span class="t" style="left:564.00px;top:388.92px;font-size:4.15px;color:#202020;transform:scaleX(1.009);font-family:'Liberation Serif',serif;font-weight:normal">4/30/2022</span>
<span class="t" style="left:637.00px;top:388.92px;font-size:4.15px;color:#202020;transform:scaleX(0.867);font-family:'Liberation Serif',serif;font-weight:normal">Sheet</span>
<span class="t" style="left:648.00px;top:388.92px;font-size:4.15px;color:#202020;transform:scaleX(0.867);font-family:'Liberation Serif',serif;font-weight:normal">of</span>
<span class="t" style="left:542.00px;top:393.92px;font-size:4.15px;color:#202020;transform:scaleX(0.853);font-family:'Liberation Serif',serif;font-weight:normal">File:</span>
<span class="t" style="left:564.00px;top:393.92px;font-size:4.15px;color:#202020;transform:scaleX(1.013);font-family:'Liberation Serif',serif;font-weight:normal">C:\Users\..\Sheet1.SchDoc</span>
<span class="t" style="left:637.00px;top:393.92px;font-size:4.15px;color:#202020;transform:scaleX(0.818);font-family:'Liberation Serif',serif;font-weight:normal">Drawn By:</span>
<span class="t" style="left:240.00px;top:52.70px;font-size:4.65px;color:#202020;transform:scaleX(0.860);font-family:'Liberation Serif',serif;font-weight:normal">1</span>
<span class="t" style="left:375.50px;top:52.70px;font-size:4.65px;color:#202020;transform:scaleX(0.860);font-family:'Liberation Serif',serif;font-weight:normal">2</span>
<span class="t" style="left:510.50px;top:52.70px;font-size:4.65px;color:#202020;transform:scaleX(0.860);font-family:'Liberation Serif',serif;font-weight:normal">3</span>
<span class="t" style="left:646.00px;top:52.70px;font-size:4.65px;color:#202020;transform:scaleX(0.860);font-family:'Liberation Serif',serif;font-weight:normal">4</span>
<span class="t" style="left:177.50px;top:92.78px;font-size:4.32px;color:#202020;transform:scaleX(0.801);font-family:'Liberation Serif',serif;font-weight:normal">A</span>
<span class="t" style="left:177.50px;top:182.08px;font-size:4.32px;color:#202020;transform:scaleX(0.868);font-family:'Liberation Serif',serif;font-weight:normal">B</span>
<span class="t" style="left:177.50px;top:271.08px;font-size:4.32px;color:#202020;transform:scaleX(0.868);font-family:'Liberation Serif',serif;font-weight:normal">C</span>
<span class="t" style="left:177.50px;top:360.58px;font-size:4.32px;color:#202020;transform:scaleX(0.801);font-family:'Liberation Serif',serif;font-weight:normal">D</span>
<span class="t" style="left:708.00px;top:92.78px;font-size:4.32px;color:#202020;transform:scaleX(0.801);font-family:'Liberation Serif',serif;font-weight:normal">A</span>
<span class="t" style="left:708.00px;top:182.08px;font-size:4.32px;color:#202020;transform:scaleX(0.868);font-family:'Liberation Serif',serif;font-weight:normal">B</span>
<span class="t" style="left:708.00px;top:271.08px;font-size:4.32px;color:#202020;transform:scaleX(0.868);font-family:'Liberation Serif',serif;font-weight:normal">C</span>
<span class="t" style="left:708.00px;top:360.58px;font-size:4.32px;color:#202020;transform:scaleX(0.801);font-family:'Liberation Serif',serif;font-weight:normal">D</span>
</body></html>
